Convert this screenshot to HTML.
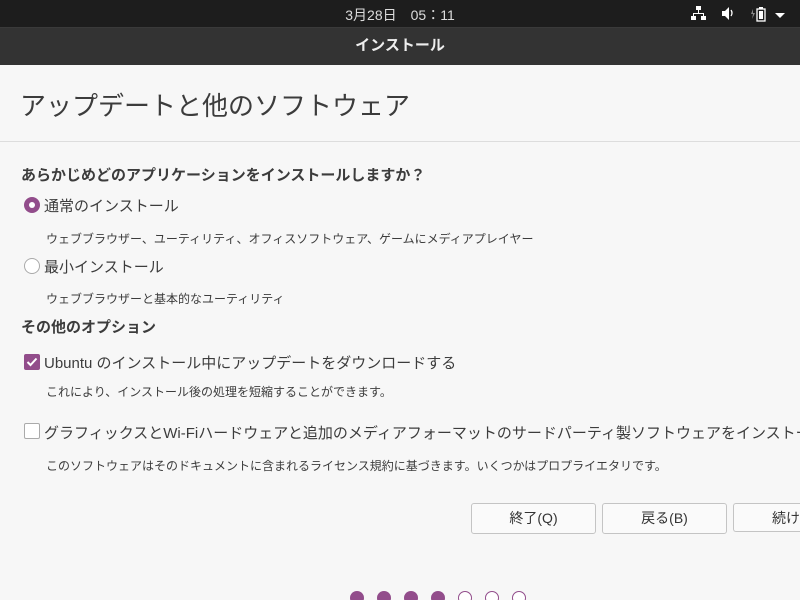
<!DOCTYPE html>
<html><head><meta charset="utf-8"><style>
html,body{margin:0;width:800px;height:600px;overflow:hidden}
body{background:#f7f7f7;font-family:"Liberation Sans","Noto Sans CJK JP",sans-serif;color:#3c3c3c}
#w{position:relative;width:800px;height:600px;overflow:hidden}
.a{position:absolute;white-space:nowrap}
#top{left:0;top:0;width:800px;height:27px;background:#1d1d1d}
#tb{left:0;top:27px;width:800px;height:37px;background:#333;border-top:1px solid #3a3a3a}
.btn{position:absolute;top:503px;height:29px;width:123px;border:1px solid #c4c4c4;border-radius:3px;background:#fafafa;font-size:14px;text-align:center;line-height:29px;color:#333;overflow:hidden}
.dot{position:absolute;top:591px;width:14px;height:14px;border-radius:50%;box-sizing:border-box}
.f{background:#924d8b}.e{border:1px solid #924d8b;background:#fff}
</style></head><body><div id="w">
<div class="a" id="top"></div>
<div class="a" style="left:0;top:0;width:800px;text-align:center;line-height:30px;color:#ddd;font-size:14px">3月28日　05：11</div>
<svg class="a" style="left:690px;top:5px" width="100" height="18" viewBox="0 0 100 18">
<g fill="#fff"><rect x="6" y="1" width="5" height="4"/><rect x="8" y="5" width="1" height="3"/><rect x="3" y="8" width="11" height="1"/><rect x="3" y="8" width="1" height="3"/><rect x="13" y="8" width="1" height="3"/><rect x="1" y="11" width="5" height="4"/><rect x="11" y="11" width="5" height="4"/>
<path d="M32 6h3l4-4v13l-4-4h-3z"/><path d="M41 5q2 3 0 6" stroke="#fff" fill="none" stroke-width="1.3"/>
<path d="M63 4l-2 5h2l-1 5 3-6h-2z" fill="#888"/><rect x="67" y="4" width="8" height="12" fill="none" stroke="#fff" stroke-width="1.3"/><rect x="69" y="2" width="4" height="2"/><rect x="69" y="6" width="4" height="8"/>
<path d="M85 8h10l-5 5z"/></g></svg>
<div class="a" id="tb"></div>
<div class="a" style="left:0;top:27px;width:800px;text-align:center;line-height:38px;color:#eee;font-size:15px;font-weight:bold">インストール</div>
<div class="a" style="left:20px;top:86px;font-size:26px;color:#3c3c3c">アップデートと他のソフトウェア</div>
<div class="a" style="left:0;top:141px;width:800px;height:1px;background:#ddd"></div>
<div class="a" style="left:21px;top:164px;font-size:15px;font-weight:bold">あらかじめどのアプリケーションをインストールしますか？</div>
<div class="a" style="left:24px;top:197px;width:16px;height:16px;border-radius:50%;background:#924d8b"><div style="margin:5px;width:6px;height:6px;border-radius:50%;background:#fff"></div></div>
<div class="a" style="left:44px;top:195px;font-size:15px">通常のインストール</div>
<div class="a" style="left:46px;top:230px;font-size:12px">ウェブブラウザー、ユーティリティ、オフィスソフトウェア、ゲームにメディアプレイヤー</div>
<div class="a" style="left:24px;top:258px;width:14px;height:14px;border-radius:50%;border:1px solid #aaa;background:#fff"></div>
<div class="a" style="left:44px;top:256px;font-size:15px">最小インストール</div>
<div class="a" style="left:46px;top:290px;font-size:12px">ウェブブラウザーと基本的なユーティリティ</div>
<div class="a" style="left:21px;top:316px;font-size:15px;font-weight:bold">その他のオプション</div>
<div class="a" style="left:24px;top:354px;width:16px;height:16px;border-radius:2px;background:#924d8b"><svg width="16" height="16"><path d="M3.5 8l3 3 6-6.5" stroke="#fff" stroke-width="2" fill="none"/></svg></div>
<div class="a" style="left:44px;top:352px;font-size:15px">Ubuntu のインストール中にアップデートをダウンロードする</div>
<div class="a" style="left:46px;top:383px;font-size:12px">これにより、インストール後の処理を短縮することができます。</div>
<div class="a" style="left:24px;top:423px;width:14px;height:14px;border-radius:2px;border:1px solid #aaa;background:#fff"></div>
<div class="a" style="left:44px;top:422px;font-size:15px;width:756px;overflow:hidden">グラフィックスとWi-Fiハードウェアと追加のメディアフォーマットのサードパーティ製ソフトウェアをインストールする</div>
<div class="a" style="left:46px;top:457px;font-size:12px">このソフトウェアはそのドキュメントに含まれるライセンス規約に基づきます。いくつかはプロプライエタリです。</div>
<div class="btn" style="left:471px">終了(Q)</div>
<div class="btn" style="left:602px">戻る(B)</div>
<div class="btn" style="left:733px;width:67px;text-align:left;padding-left:38px;box-sizing:border-box;border-right:none;border-radius:3px 0 0 3px">続け</div>
<div class="dot f" style="left:350px"></div><div class="dot f" style="left:377px"></div><div class="dot f" style="left:404px"></div><div class="dot f" style="left:431px"></div>
<div class="dot e" style="left:458px"></div><div class="dot e" style="left:485px"></div><div class="dot e" style="left:512px"></div>
</div></body></html>
